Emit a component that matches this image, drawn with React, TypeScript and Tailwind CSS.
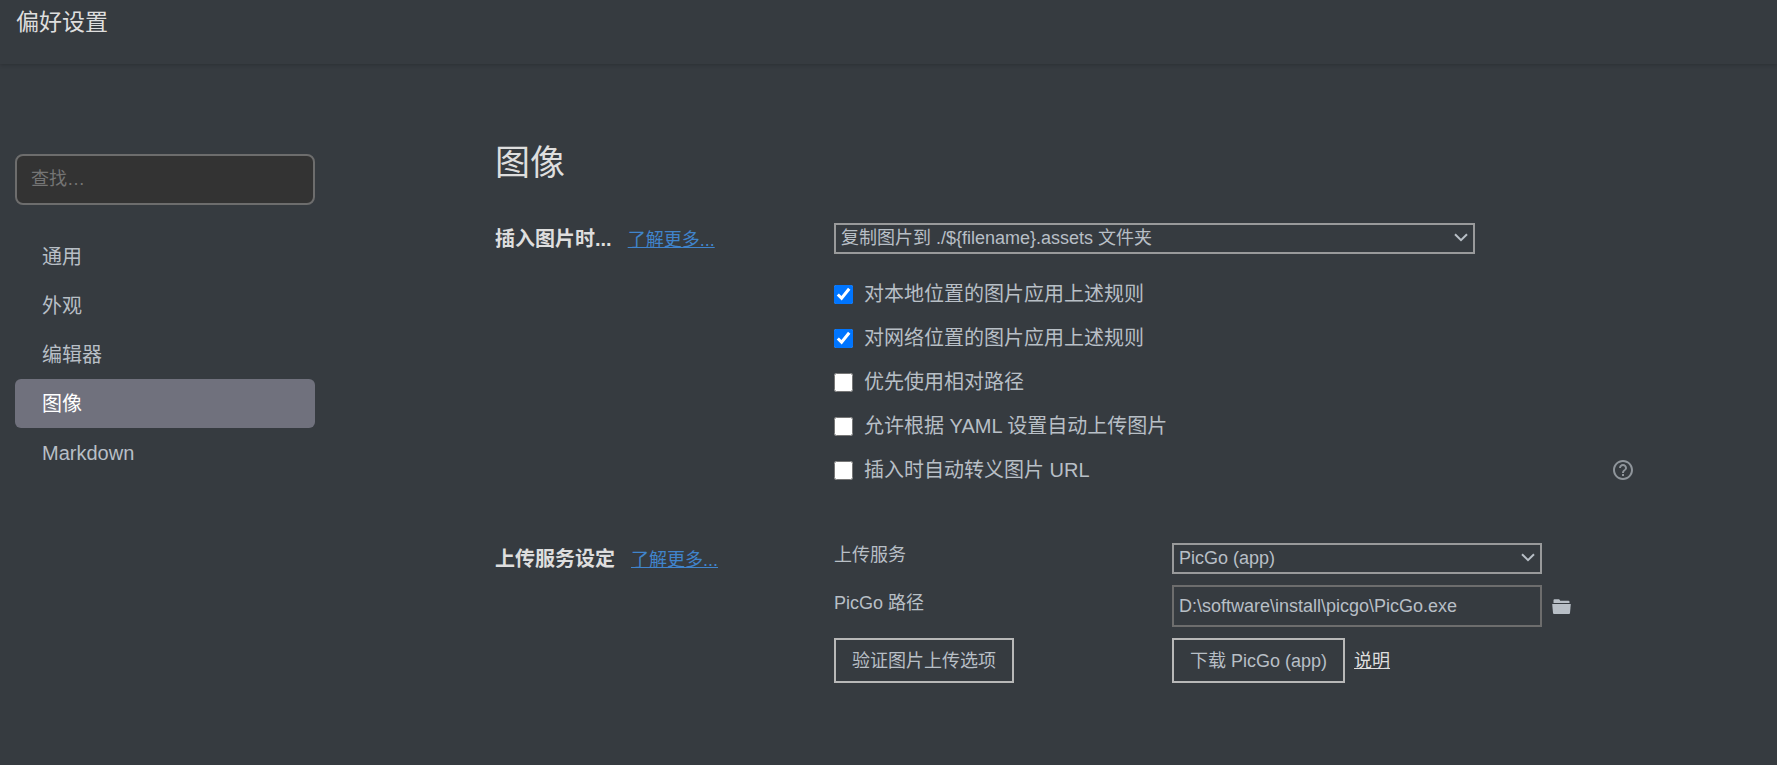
import { useState } from "react";
import type { ReactNode } from "react";

const menu = ["通用", "外观", "编辑器", "图像", "Markdown"];

const rules = [
  { label: "对本地位置的图片应用上述规则", checked: true },
  { label: "对网络位置的图片应用上述规则", checked: true },
  { label: "优先使用相对路径", checked: false },
  { label: "允许根据 YAML 设置自动上传图片", checked: false },
  { label: "插入时自动转义图片 URL", checked: false, help: true },
];

function Select({ id, label, children }: { id: string; label: string; children: ReactNode }) {
  return (
    <div className="relative w-full">
      <select
        id={id}
        aria-label={label}
        className="block h-[31px] w-full appearance-none border-2 border-[#999a9b] bg-transparent pr-8 pl-[5px] text-lg leading-[27px] text-[#b8bfc6]"
      >
        {children}
      </select>
      <svg
        viewBox="0 0 14 9"
        className="pointer-events-none absolute top-[10px] right-[7px] h-[9px] w-[14px]"
        fill="none"
        stroke="#b8bfc6"
        strokeWidth="2"
        aria-hidden="true"
      >
        <path d="M1 1.2 7 7.2l6-6" />
      </svg>
    </div>
  );
}

function HelpIcon() {
  return (
    <svg viewBox="2 2 20 20" className="size-5" fill="#8f959b" aria-hidden="true">
      <path d="M11 18h2v-2h-2v2zm1-16C6.48 2 2 6.48 2 12s4.48 10 10 10 10-4.48 10-10S17.52 2 12 2zm0 18c-4.41 0-8-3.59-8-8s3.59-8 8-8 8 3.59 8 8-3.59 8-8 8zm0-14c-2.21 0-4 1.79-4 4h2c0-1.1.9-2 2-2s2 .9 2 2c0 2-3 1.75-3 5h2c0-2.25 3-2.5 3-5 0-2.21-1.79-4-4-4z" />
    </svg>
  );
}

function FolderIcon() {
  return (
    <svg viewBox="0 0 19 15" className="h-[15px] w-[19px]" fill="#b8bfc6" aria-hidden="true">
      <path d="M1.5 4V1.2Q1.5.2 2.5.2H6.8Q7.5.2 7.8.9L8.2 1.8H16.5Q17.500 1.8 17.5 2.8V4z" />
      <path d="M.2 5H18.8L18 14Q17.9 15 17 15H2Q1.1 15 1 14z" />
    </svg>
  );
}

function SectionTitle({ title }: { title: string }) {
  return (
    <div className="flex items-baseline gap-4 leading-[33px]">
      <h3 className="text-xl leading-[33px] font-bold text-[#dedede]">{title}</h3>
      <a href="#more" className="text-lg leading-[33px] text-[#4084cc] underline">
        了解更多...
      </a>
    </div>
  );
}

export default function App() {
  const [active, setActive] = useState("图像");

  return (
    <div className="min-h-screen bg-[#363b40] font-['Liberation_Sans','Noto_Sans_CJK_SC',sans-serif] text-[#b8bfc6]">
      <header className="h-16 px-4 pt-2 shadow-[0_1px_4px_rgba(0,0,0,0.2)]">
        <h1 className="text-[23px] leading-7 text-[#dedede]">偏好设置</h1>
      </header>

      <div className="flex gap-[180px] pt-[84px] pr-36 pb-20 pl-[15px]">
        <aside className="w-[300px] shrink-0 pt-[6px]">
          <input
            type="search"
            aria-label="查找"
            placeholder="查找…"
            className="block h-[51px] w-full rounded-lg border-2 border-[#6d6d6d] bg-[#333333] px-[14px] text-lg placeholder:text-[#757575]"
          />
          <nav className="mt-[27px]">
            {menu.map((item) => (
              <button
                key={item}
                type="button"
                onClick={() => setActive(item)}
                className={
                  item === active
                    ? "block h-[49px] w-full rounded-md bg-[#70717d] px-[27px] text-left text-xl text-white"
                    : "block h-[49px] w-full rounded-md px-[27px] text-left text-xl"
                }
              >
                {item}
              </button>
            ))}
          </nav>
        </aside>

        <main className="min-w-0 flex-1">
          <h2 className="text-[35px] leading-[29px] text-[#dedede]">图像</h2>

          <section className="mt-[46px] grid grid-cols-[339px_1fr]">
            <SectionTitle title="插入图片时..." />
            <div>
              <div className="pr-[158px]">
                <Select id="insert-action" label="插入图片时">
                  <option>{"复制图片到 ./${filename}.assets 文件夹"}</option>
                </Select>
              </div>
              <div className="mt-[18px]">
                {rules.map((rule) => (
                  <div key={rule.label} className="flex h-11 items-center justify-between">
                    <label className="flex items-center gap-[11px] text-xl leading-7">
                      <input type="checkbox" defaultChecked={rule.checked} className="size-[19px]" />
                      {rule.label}
                    </label>
                    {rule.help && (
                      <button type="button" aria-label="帮助">
                        <HelpIcon />
                      </button>
                    )}
                  </div>
                ))}
              </div>
            </div>
          </section>

          <section className="mt-[51px] grid grid-cols-[339px_1fr]">
            <SectionTitle title="上传服务设定" />
            <div className="grid grid-cols-[338px_1fr] gap-y-[11px] text-lg">
              <label htmlFor="service" className="leading-6">
                上传服务
              </label>
              <div className="w-[370px]">
                <Select id="service" label="上传服务">
                  <option>PicGo (app)</option>
                </Select>
              </div>

              <label htmlFor="path" className="leading-9">
                PicGo 路径
              </label>
              <div className="flex items-center gap-[10px]">
                <input
                  id="path"
                  type="text"
                  defaultValue="D:\software\install\picgo\PicGo.exe"
                  className="h-[42px] w-[370px] border-2 border-[#6d6d6d] bg-transparent px-[5px]"
                />
                <button type="button" aria-label="选择文件夹">
                  <FolderIcon />
                </button>
              </div>

              <div>
                <button type="button" className="h-[45px] border-2 border-[#b8b8b8] px-4">
                  验证图片上传选项
                </button>
              </div>
              <div className="flex items-center gap-[9px]">
                <button type="button" className="h-[45px] border-2 border-[#b8b8b8] px-4">
                  下载 PicGo (app)
                </button>
                <a href="#docs" className="text-[#dedede] underline">
                  说明
                </a>
              </div>
            </div>
          </section>
        </main>
      </div>
    </div>
  );
}
